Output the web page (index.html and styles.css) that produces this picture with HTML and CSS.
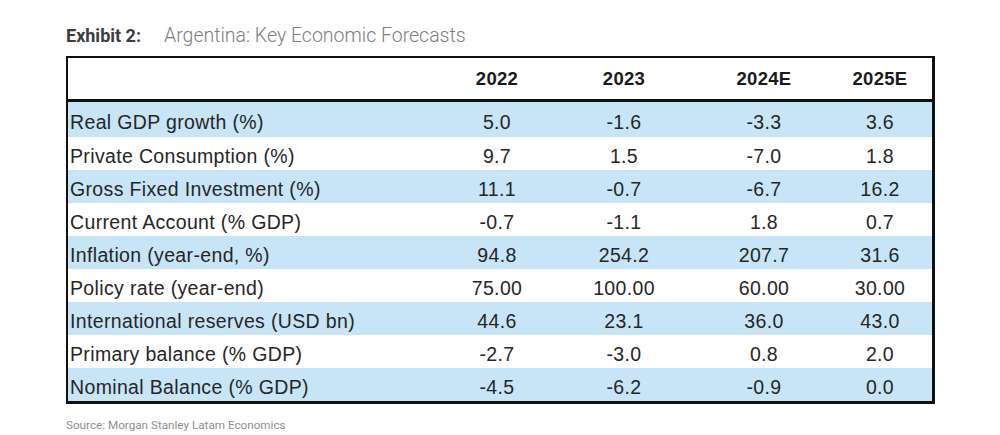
FILE: index.html
```html
<!DOCTYPE html>
<html lang="en">
<head>
<meta charset="utf-8">
<title>Argentina: Key Economic Forecasts</title>
<link rel="stylesheet" href="styles.css">
</head>
<body>
<div class="exhibit">
  <div class="title">
    <span class="label">Exhibit 2:</span>
    <span class="name">Argentina: Key Economic Forecasts</span>
  </div>
  <div class="table">
    <div class="row head">
      <div class="cell first"></div>
      <div class="cell">2022</div>
      <div class="cell">2023</div>
      <div class="cell">2024E</div>
      <div class="cell">2025E</div>
    </div>
    <div class="body">
      <div class="row blue"><div class="cell first">Real GDP growth (%)</div><div class="cell">5.0</div><div class="cell">-1.6</div><div class="cell">-3.3</div><div class="cell">3.6</div></div>
      <div class="row"><div class="cell first">Private Consumption (%)</div><div class="cell">9.7</div><div class="cell">1.5</div><div class="cell">-7.0</div><div class="cell">1.8</div></div>
      <div class="row blue"><div class="cell first">Gross Fixed Investment (%)</div><div class="cell">11.1</div><div class="cell">-0.7</div><div class="cell">-6.7</div><div class="cell">16.2</div></div>
      <div class="row"><div class="cell first">Current Account (% GDP)</div><div class="cell">-0.7</div><div class="cell">-1.1</div><div class="cell">1.8</div><div class="cell">0.7</div></div>
      <div class="row blue"><div class="cell first">Inflation (year-end, %)</div><div class="cell">94.8</div><div class="cell">254.2</div><div class="cell">207.7</div><div class="cell">31.6</div></div>
      <div class="row"><div class="cell first">Policy rate (year-end)</div><div class="cell">75.00</div><div class="cell">100.00</div><div class="cell">60.00</div><div class="cell">30.00</div></div>
      <div class="row blue"><div class="cell first">International reserves (USD bn)</div><div class="cell">44.6</div><div class="cell">23.1</div><div class="cell">36.0</div><div class="cell">43.0</div></div>
      <div class="row"><div class="cell first">Primary balance (% GDP)</div><div class="cell">-2.7</div><div class="cell">-3.0</div><div class="cell">0.8</div><div class="cell">2.0</div></div>
      <div class="row blue"><div class="cell first">Nominal Balance (% GDP)</div><div class="cell">-4.5</div><div class="cell">-6.2</div><div class="cell">-0.9</div><div class="cell">0.0</div></div>
    </div>
  </div>
  <div class="source">Source: Morgan Stanley Latam Economics</div>
</div>
</body>
</html>
```
FILE: styles.css
```css
html, body {
  margin: 0;
  padding: 0;
  background: #ffffff;
}

* {
  box-sizing: border-box;
}

.exhibit {
  padding: 24px 0 0 66px;
  width: 935px;
}

.title {
  font-family: Roboto, "Liberation Sans", sans-serif;
  line-height: 24px;
  height: 24px;
  display: flex;
  align-items: baseline;
  gap: 23px;
}

.title .label {
  font-size: 18px;
  font-weight: 700;
  color: #3d3d3d;
}

.title .name {
  font-size: 19.5px;
  font-weight: 300;
  color: #7e7e7e;
}

.table {
  margin-top: 8px;
  border-top: 2px solid #111;
  border-left: 2px solid #111;
  border-right: 3px solid #111;
  border-bottom: 3px solid #111;
  font-family: "Liberation Sans", Arial, sans-serif;
  color: #262626;
}

.row {
  display: grid;
  grid-template-columns: 364px 130px 124px 156px 76px 1fr;
  align-items: center;
  height: 33px;
  padding-top: 5px;
  font-size: 19.5px;
  letter-spacing: 0.35px;
}

.row.head {
  height: 44px;
  padding-top: 1px;
  border-bottom: 3px solid #111;
  font-weight: 700;
  font-size: 18.5px;
  letter-spacing: 0.3px;
  color: #1a1a1a;
}

.body .row:first-child {
  height: 35px;
  padding-top: 6px;
}

.row.blue {
  background: #c7e5f6;
}

.cell {
  text-align: center;
  white-space: nowrap;
}

.cell.first {
  text-align: left;
  padding-left: 2px;
}

.source {
  margin-top: 14px;
  font-family: Roboto, "Liberation Sans", sans-serif;
  font-size: 11.7px;
  color: #8f8f8f;
}
```
